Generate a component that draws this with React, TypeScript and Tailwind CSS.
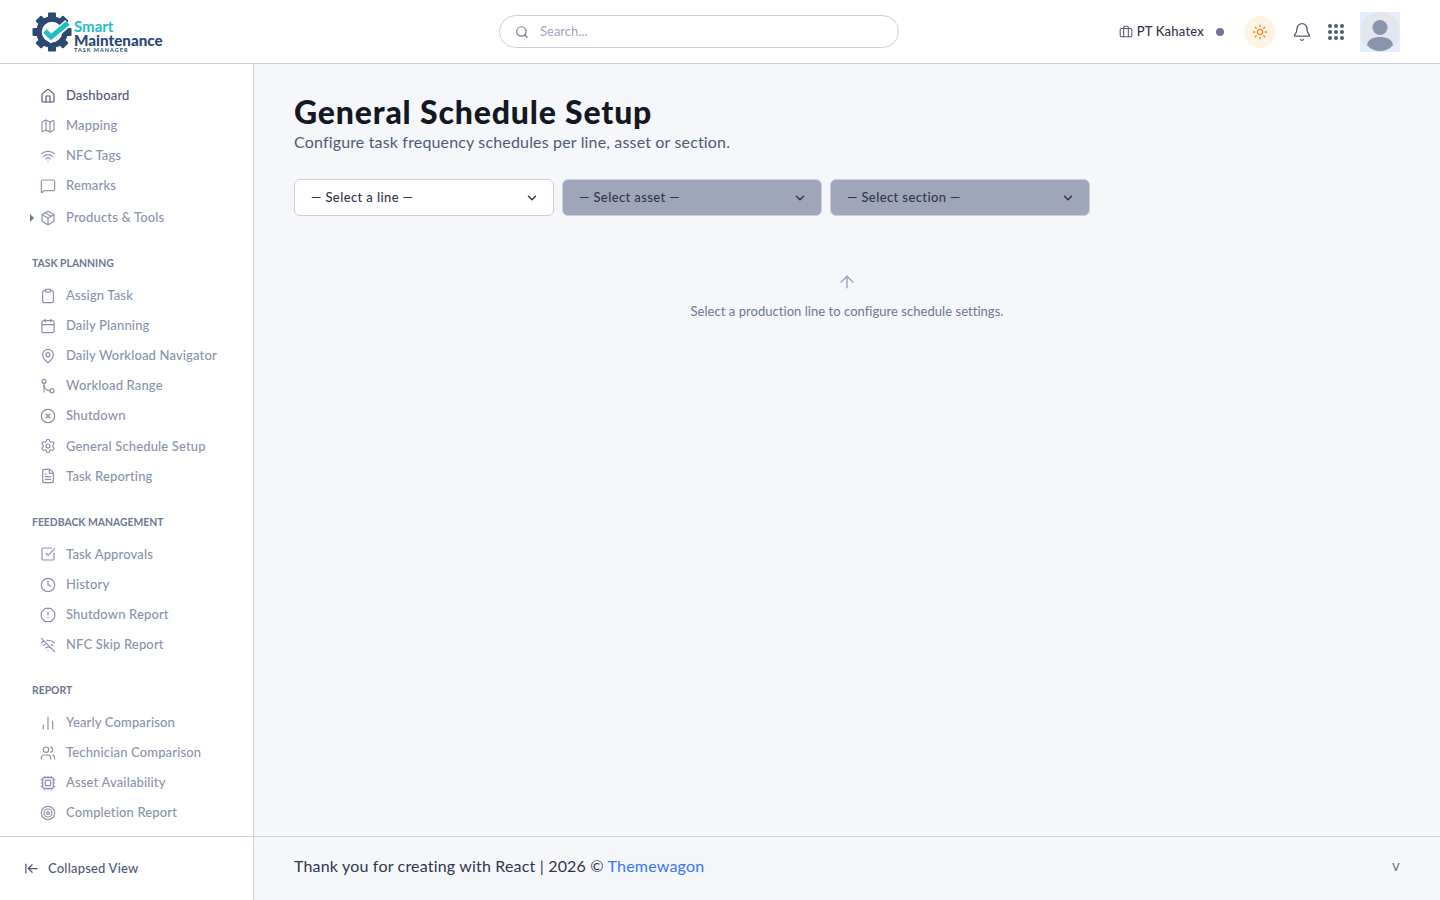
import React from 'react';
import {
  House, Map, Wifi, MessageSquare, Package, Clipboard, Calendar, MapPin, CircleX, Settings, FileText,
  SquareCheckBig, Clock, OctagonAlert, WifiOff, ChartNoAxesColumn, Users, Cpu, Target, ArrowLeftToLine,
  Search, Briefcase, Sun, Bell, ChevronDown, ArrowUp, LucideIcon,
} from 'lucide-react';

const RouteIcon: React.FC<{ size?: number; className?: string; strokeWidth?: number }> = ({ size = 16, className, strokeWidth = 2 }) => (
  <svg width={size} height={size} viewBox="0 0 24 24" fill="none" stroke="currentColor" strokeWidth={strokeWidth} strokeLinecap="round" strokeLinejoin="round" className={className}>
    <circle cx="6" cy="5" r="3" />
    <circle cx="18" cy="19" r="3" />
    <path d="M6 8v13" />
    <path d="M6 11c1 5 4 8 9 8" />
  </svg>
);

type Item = { label: string; icon: LucideIcon | typeof RouteIcon; active?: boolean; caret?: boolean };

const top: Item[] = [
  { label: 'Dashboard', icon: House, active: true },
  { label: 'Mapping', icon: Map },
  { label: 'NFC Tags', icon: Wifi },
  { label: 'Remarks', icon: MessageSquare },
];

const groups: { title: string; items: Item[] }[] = [
  {
    title: 'TASK PLANNING',
    items: [
      { label: 'Assign Task', icon: Clipboard },
      { label: 'Daily Planning', icon: Calendar },
      { label: 'Daily Workload Navigator', icon: MapPin },
      { label: 'Workload Range', icon: RouteIcon },
      { label: 'Shutdown', icon: CircleX },
      { label: 'General Schedule Setup', icon: Settings },
      { label: 'Task Reporting', icon: FileText },
    ],
  },
  {
    title: 'FEEDBACK MANAGEMENT',
    items: [
      { label: 'Task Approvals', icon: SquareCheckBig },
      { label: 'History', icon: Clock },
      { label: 'Shutdown Report', icon: OctagonAlert },
      { label: 'NFC Skip Report', icon: WifiOff },
    ],
  },
  {
    title: 'REPORT',
    items: [
      { label: 'Yearly Comparison', icon: ChartNoAxesColumn },
      { label: 'Technician Comparison', icon: Users },
      { label: 'Asset Availability', icon: Cpu },
      { label: 'Completion Report', icon: Target },
    ],
  },
];

const NavRow: React.FC<{ item: Item }> = ({ item }) => {
  const Icon = item.icon;
  return (
    <div className={`relative flex h-[30.08px] items-center gap-[10px] pl-[40px] text-[13px] font-medium tracking-[0.15px] ${item.active ? 'text-[#525b75]' : 'text-[#8a94ad]'}`}>
      {item.caret && <span className="absolute left-[30px] top-[11px] h-0 w-0 border-y-[4px] border-l-[4px] border-y-transparent border-l-[#6e7891]" />}
      <Icon size={16} strokeWidth={1.8} className="shrink-0" />
      <span>{item.label}</span>
    </div>
  );
};

const Logo = () => (
  <div className="flex items-center">
    <svg width="42" height="42" viewBox="0 0 42 42" className="shrink-0">
      <g fill="#2a4a73">
        {[0, 45, 90, 135, 180, 225, 270, 315].map((a) => (
          <rect key={a} x="17" y="1.500" width="8" height="8" rx="1" transform={`rotate(${a} 21 21)`} />
        ))}
      </g>
      <circle cx="21" cy="21" r="13" fill="none" stroke="#2a4a73" strokeWidth="5.500" />
      <path d="M14 21l6 6 17-15" fill="none" stroke="#ffffff" strokeWidth="8" />
      <path d="M14 20l6 6 17-14" fill="none" stroke="#1fbccb" strokeWidth="5" />
    </svg>
    <div className="ml-[1px] flex flex-col pt-[9px]">
      <span className="h-[13px] text-[15px] font-bold leading-[13px] text-[#1fbccb]">Smart</span>
      <span className="h-[14px] text-[15.2px] font-black leading-[15px] text-[#2a4a73]">Maintenance</span>
      <span className="h-[6px] text-[5.5px] font-bold leading-[6px] tracking-[1px] text-[#2a4a73]">TASK MANAGER</span>
    </div>
  </div>
);

const Avatar = () => (
  <div className="h-10 w-10 bg-[#e5edff]">
    <svg width="40" height="40" viewBox="0 0 40 40">
      <circle cx="20" cy="20" r="20" fill="#e3e6ed" />
      <circle cx="20" cy="15.500" r="7.500" fill="#8a94ad" />
      <path d="M7 33c1-6 7-8 13-8s12 2 13 8c-3.500 4-8 6-13 6s-9.500-2-13-6z" fill="#8a94ad" />
    </svg>
  </div>
);

const SelectBox: React.FC<{ label: string; disabled?: boolean }> = ({ label, disabled }) => (
  <div className={`flex h-[37px] w-[260px] items-center justify-between rounded-md border border-[#cbd0dd] pl-4 pr-[14px] text-[13px] font-medium tracking-[0.4px] text-[#31374a] ${disabled ? 'bg-[#9fa6bc]' : 'bg-white'}`}>
    <span>{label}</span>
    <ChevronDown size={14} strokeWidth={2.5} className="text-[#31374a]" />
  </div>
);

export default function App() {
  return (
    <div className="flex h-screen flex-col overflow-hidden bg-[#f5f7fa] font-['Lato',sans-serif]">
      <header className="flex h-16 shrink-0 items-center border-b border-[#cbd0dd] bg-white">
        <div className="w-[499px] shrink-0 pl-[31px]">
          <Logo />
        </div>
        <div className="flex h-[33px] w-[400px] items-center gap-[11px] rounded-full border border-[#cbd0dd] pl-[15px]">
          <Search size={14} strokeWidth={2} className="text-[#6e7891]" />
          <span className="text-[13px] text-[#9fa6bc]">Search...</span>
        </div>
        <div className="flex flex-1 items-center justify-end pr-10">
          <Briefcase size={14} strokeWidth={1.8} className="text-[#525b75]" />
          <span className="ml-[4px] text-[13px] font-medium tracking-[0.2px] text-[#31374a]">PT Kahatex</span>
          <span className="ml-3 h-2 w-2 rounded-full bg-[#6e7891]" />
          <div className="ml-5 flex h-8 w-8 items-center justify-center rounded-full bg-[#fff3e3]">
            <Sun size={16} strokeWidth={2} className="text-[#f08a24]" />
          </div>
          <Bell size={20} strokeWidth={1.6} className="ml-[16px] text-[#525b75]" />
          <div className="ml-[16px] grid grid-cols-3 gap-[2px]">
            {Array.from({ length: 9 }).map((_, i) => (
              <span key={i} className="h-1 w-1 rounded-full bg-[#525b75]" />
            ))}
          </div>
          <div className="ml-4">
            <Avatar />
          </div>
        </div>
      </header>

      <div className="flex min-h-0 flex-1">
        <aside className="flex w-[254px] shrink-0 flex-col border-r border-[#cbd0dd] bg-white">
          <nav className="min-h-0 flex-1 overflow-hidden pt-[16.500px]">
            {top.map((item) => (
              <NavRow key={item.label} item={item} />
            ))}
            <div className="mt-[2px]">
              <NavRow item={{ label: 'Products & Tools', icon: Package, caret: true }} />
            </div>
            {groups.map((g) => (
              <div key={g.title} className="mt-[23px]">
                <div className="mb-[9px] flex h-[16px] items-center pl-8 text-[10.4px] font-bold text-[#6e7891]">{g.title}</div>
                {g.items.map((item) => (
                  <NavRow key={item.label} item={item} />
                ))}
              </div>
            ))}
          </nav>
          <div className="flex h-16 shrink-0 items-center gap-[9px] border-t border-[#cbd0dd] pl-6 text-[13px] font-medium tracking-[0.2px] text-[#525b75]">
            <ArrowLeftToLine size={15} strokeWidth={2} />
            <span>Collapsed View</span>
          </div>
        </aside>

        <div className="flex min-w-0 flex-1 flex-col">
          <main className="min-h-0 flex-1 px-10 pt-[28px]">
            <h1 className="text-[32px] font-black leading-[40px] tracking-[0.82px] text-[#141824]">General Schedule Setup</h1>
            <p className="text-[16px] leading-[20px] tracking-[0.16px] text-[#525b75]">Configure task frequency schedules per line, asset or section.</p>
            <div className="mt-[27px] flex gap-2">
              <SelectBox label="— Select a line —" />
              <SelectBox label="— Select asset —" disabled />
              <SelectBox label="— Select section —" disabled />
            </div>
            <div className="mt-[56px] flex flex-col items-center">
              <ArrowUp size={20} strokeWidth={1.75} className="text-[#9fa6bc]" />
              <p className="mt-[10px] text-[13px] tracking-[0.04px] text-[#6e7891]">Select a production line to configure schedule settings.</p>
            </div>
          </main>
          <footer className="flex h-16 shrink-0 items-center justify-between border-t border-[#cbd0dd] px-10 pb-[6px] text-[16px] tracking-[0.18px] text-[#31374a]">
            <span>
              Thank you for creating with React | 2026 © <span className="text-[#3874ff]">Themewagon</span>
            </span>
            <span className="text-[15px] text-[#6e7891]">v</span>
          </footer>
        </div>
      </div>
    </div>
  );
}
